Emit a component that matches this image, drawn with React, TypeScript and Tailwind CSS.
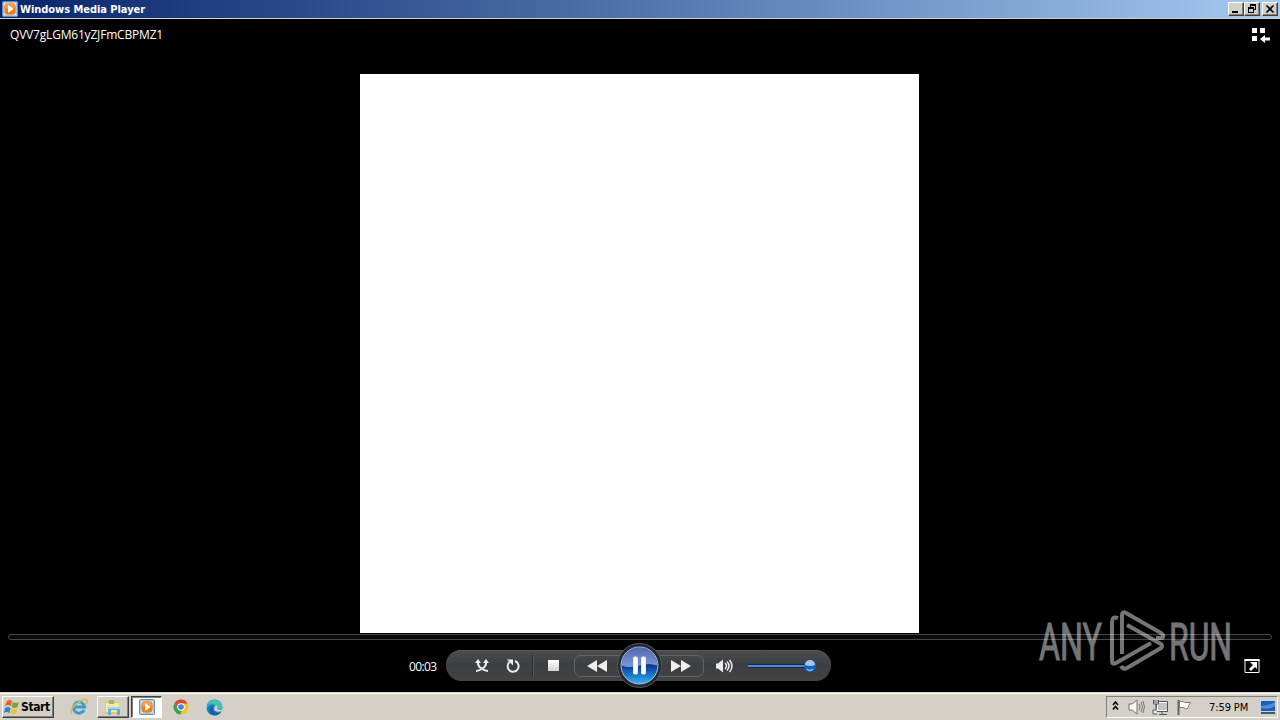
import type { ReactNode } from "react";

const raised = "border border-t-white border-l-white border-r-[#404040] border-b-[#404040] shadow-[inset_-1px_-1px_0_#808080]";

function PlayerIcon() {
    return (
        <svg width="16" height="16" viewBox="0 0 16 16">
            <rect x=".5" y=".5" width="15" height="15" rx="1" fill="#a8c6e7" stroke="#5f8fc4" />
            <rect x="2" y="2" width="12" height="12" fill="#d7e8f7" />
            <rect x="2.3" y="2.3" width="11.4" height="11.4" rx="4" fill="#ee7f17" />
            <path d="M3 7q0-4.5 3.5-4.5h3Q13 2.5 13 7 8 8.5 3 7" fill="#f5a04d" />
            <path d="M6 4 11.6 8 6 12Z" fill="#fff" />
        </svg>
    );
}

function CaptionButton({ children }: { children: ReactNode }) {
    return (
        <button className={`${raised} flex h-[14px] w-[16px] items-center justify-center bg-[#d4d0c8]`}>
            {children}
        </button>
    );
}

function TitleBar() {
    return (
        <div className="flex h-[19px] shrink-0 items-center justify-between border-b border-[#d4d0c8] bg-linear-to-r from-[#0a246a] to-[#a6caf0] px-[2px]">
            <div className="flex items-center gap-[2px]">
                <PlayerIcon />
                <span className="pt-px font-['DejaVu_Sans_Condensed','DejaVu_Sans',sans-serif] text-[11px] leading-[17px] font-bold tracking-[-0.04px] whitespace-nowrap text-white">
                    Windows Media Player
                </span>
            </div>
            <div className="flex">
                <CaptionButton>
                    <svg width="14" height="12"><path d="M3 8h6v2H3z" /></svg>
                </CaptionButton>
                <CaptionButton>
                    <svg width="14" height="12" fill="none" stroke="#000" shapeRendering="crispEdges">
                        <path d="M5 1.5h6M5 2.5h6M5.5 1v3M10.5 1v6M9 6.5h2M3 4.5h6M3 5.5h6M3.5 4v6M8.5 4v6M3 9.5h6" />
                    </svg>
                </CaptionButton>
                <div className="ml-[2px] flex">
                    <CaptionButton>
                        <svg width="14" height="12"><path d="m3.5 2.5 7 7m0-7-7 7" stroke="#000" strokeWidth="1.7" /></svg>
                    </CaptionButton>
                </div>
            </div>
        </div>
    );
}

function Watermark() {
    return (
        <svg className="absolute top-[600px] left-[1026px] overflow-visible" width="224" height="86" viewBox="-10 -8 224 86" opacity=".46">
            <g fill="#fff" stroke="#fff" strokeWidth=".9" fontFamily="Roboto, sans-serif" fontSize="52">
                <text x="3" y="51.5" textLength="63" lengthAdjust="spacingAndGlyphs">ANY</text>
                <text x="133" y="51.5" textLength="63" lengthAdjust="spacingAndGlyphs">RUN</text>
            </g>
            <g fill="none" stroke="#fff" strokeWidth="4" strokeLinejoin="round">
                <path d="M82 10Q76 8 76 14V53Q76 57 80 55L115 35" />
                <path d="M86 46V7Q86 3 90 5L125 25Q129 28 126 30L120 30" />
                <path d="M91 17 125 36Q127 38 125 40L91 60Q87 62 85 58" />
            </g>
        </svg>
    );
}

function Controls() {
    return (
        <div className="flex h-[31px] w-[385px] items-center rounded-full bg-linear-to-b from-[#4b4d50] via-[#3c3e41] to-[#424447] pl-[28px] shadow-[inset_0_1px_0_#585a5d]">
            <svg width="16" height="16" fill="none" stroke="#eee" strokeWidth="2">
                <path d="M4 4v1.5q0 2.5 3.5 5T14 13M12 4v1.5q0 2.5-3.5 5T2 13" />
                <path d="m1 5 3-4 3 4zM9 5l3-4 3 4z" fill="#eee" stroke="none" />
            </svg>
            <svg className="ml-[15px]" width="16" height="16" fill="none">
                <path d="M4.5 4A5.5 5.5 0 1 0 10 3" stroke="#eee" strokeWidth="2" />
                <path d="M2 1.5h6v6z" fill="#eee" />
            </svg>
            <div className="ml-[11px] h-[21px] w-[2px] border-l border-[#2b2d2f] bg-[#55575a]" />
            <div className="ml-[14px] h-[11px] w-[11px] bg-linear-to-b from-white to-[#d2d2d2]" />
            <div className="ml-[15px] flex h-[22px] w-[130px] items-center justify-between rounded-[7px] border border-[#626467] px-[12px]">
                <svg width="20" height="12"><path d="M10 0v12L0 6zM20 0v12L10 6z" fill="#eee" /></svg>
                <svg className="-my-3 shrink-0" width="48" height="48" viewBox="0 0 48 48">
                    <defs>
                        <linearGradient id="top" x2="0" y2="1"><stop stopColor="#5468b4" /><stop offset="1" stopColor="#7d98d8" /></linearGradient>
                        <linearGradient id="ball" x2="0" y2="1"><stop stopColor="#3253a4" /><stop offset=".52" stopColor="#0b3b98" /><stop offset="1" stopColor="#34b6f3" /></linearGradient>
                    </defs>
                    <circle cx="24.5" cy="23.5" r="22" fill="#24272d" stroke="#55595f" />
                    <circle cx="24.5" cy="23.5" r="18.5" fill="url(#ball)" stroke="#b4c2de" />
                    <path d="M6.5 23.5a18 18 0 0 1 36 0Q34 20.5 24.5 23.5T6.5 23.5" fill="url(#top)" />
                    <rect x="18.5" y="15" width="4" height="17" rx="1" fill="#fff" stroke="#e5e9f1" />
                    <rect x="26.5" y="15" width="4" height="17" rx="1" fill="#fff" stroke="#e5e9f1" />
                </svg>
                <svg width="20" height="12"><path d="M0 0v12l10-6zM10 0v12l10-6z" fill="#eee" /></svg>
            </div>
            <svg className="ml-[11px]" width="20" height="16" fill="none" stroke="#eee" strokeWidth="1.5">
                <path d="M1 5.5h2l5-4v13l-5-4H1z" fill="#eee" stroke="none" />
                <path d="M10 5q3 3 0 6M12 3.5q4 4.5 0 9M14.5 2q5 6 0 12" />
            </svg>
            <svg className="ml-[13px]" width="70" height="16">
                <path d="M0 8h64" stroke="#1e2a42" strokeWidth="4" />
                <path d="M0 8h64" stroke="#4588df" strokeWidth="2" />
                <circle cx="62" cy="8" r="6" fill="#1563c0" />
                <path d="M57 7a5 5 0 0 1 10 0Q62 9 57 7" fill="#a6c8ed" />
                <path d="M59 11q3 3 6 0" stroke="#63c6fb" strokeWidth="1.5" fill="none" />
            </svg>
        </div>
    );
}

function Taskbar() {
    return (
        <div className="flex h-[28px] shrink-0 items-center border-t border-[#d4d0c8] bg-[#d4d0c8] px-[2px] shadow-[inset_0_1px_0_white]">
            <div className={`${raised} mt-px flex h-[22px] w-[52px] items-center gap-px pl-px`}>
                <svg className="shrink-0" width="16" height="16">
                    <path d="M3 2q3-2 5 0L7 7Q4 5 1 7z" fill="#eb6029" />
                    <path d="M9 3q3 2 6 0l-1.5 5q-3 2-6 0z" fill="#71a936" />
                    <path d="M1 9q3-2 5.5 0l-1 5q-3-2-5.5 0z" fill="#3183c8" />
                    <path d="M7.500 9.5q3 2 6 0l-1 4.500q-3 2-6 0z" fill="#f4bd2e" />
                </svg>
                <span className="font-['DejaVu_Sans_Condensed','DejaVu_Sans',sans-serif] text-[12px] leading-[18px] font-bold tracking-[-0.4px]">Start</span>
            </div>
            <svg className="mt-px ml-[16px]" width="18" height="18" fill="none">
                <path d="M14 12A5.5 5.5 0 1 1 14.5 9H5" stroke="#399bd5" strokeWidth="3" />
                <path d="M4 8Q6 4 11 5" stroke="#90d5f2" />
                <path d="M2 16Q-1 12 6 6t11-4q1 2-2 5" stroke="#e3b92f" strokeWidth="1.5" />
            </svg>
            <div className={`${raised} mt-px ml-[9px] flex h-[22px] w-[32px] items-center justify-center`}>
                <svg width="18" height="18">
                    <path d="M1 3h6l1 1h7v12H1z" fill="#e4c969" />
                    <path d="M2 5h13v9H2z" fill="#f5e7a5" />
                    <path d="M5 2h5v4H5z" fill="#8bbd78" />
                    <path d="M4 17V9h12v8h-3v-5H7v5z" fill="#62afd7" />
                    <path d="M4 9h12v2H4z" fill="#9bd9ee" />
                </svg>
            </div>
            <div className="mt-px ml-[2px] flex h-[22px] w-[31px] items-center justify-center border border-t-[#404040] border-l-[#404040] border-r-white border-b-white bg-white shadow-[inset_1px_1px_0_#808080]">
                <PlayerIcon />
            </div>
            <svg className="mt-px ml-[11px]" width="16" height="16" viewBox="0 0 16 16">
                <circle cx="8" cy="8" r="7.5" fill="#f2c51d" />
                <path d="M1.5 4.2A7.5 7.5 0 0 1 14.6 4.5H8a3.5 3.5 0 0 0-3 5z" fill="#db493b" />
                <path d="M1.5 4.2 5 10a3.5 3.5 0 0 0 4 1.5l-2 4A7.5 7.5 0 0 1 1.5 4.2" fill="#2da456" />
                <circle cx="8" cy="8" r="3.8" fill="#fff" />
                <circle cx="8" cy="8" r="2.8" fill="#4381dc" />
            </svg>
            <svg className="mt-px ml-[17px]" width="17" height="17" viewBox="0 0 17 17">
                <circle cx="8.5" cy="8.5" r="8" fill="#1679c5" />
                <path d="M1 6C4-1 14-1 16 6c1 5-3 6-6 5 2-4-3-7-9-5" fill="#43c3b0" />
                <path d="M1 6q5-3 9 0-7-1-9 4z" fill="#269ed5" />
                <path d="M7 8c-2 5 3 8 8 5-4 6-12 3-11-2q0-3 3-3" fill="#155ba6" />
                <path d="M9 7c-3 5 2 7 8 5v-2c-4 2-6 1-6-1 1-2-1-3-2-2" fill="#d4d0c8" />
            </svg>
            <div className="mt-px ml-auto flex h-[22px] w-[172px] items-center border border-t-[#808080] border-l-[#808080] border-r-white border-b-white pl-[4px]">
                <svg className="-mt-[2px] shrink-0" width="9" height="14" fill="none" stroke="#000" strokeWidth="1.6"><path d="m2 6 2.5-3L7 6M2 10.5l2.5-3 2.5 3" /></svg>
                <svg className="ml-[8px] shrink-0" width="17" height="16" fill="none" stroke="#777">
                    <path d="M1 5h3l5-4v14l-5-4H1z" fill="#f5f5f5" />
                    <path d="M11 5q2 3 0 6M13 3q3 5 0 10M15 2q3 6 0 12" />
                </svg>
                <svg className="ml-[7px] shrink-0" width="17" height="17" fill="none" stroke="#555">
                    <path d="M5.5 3.5h10v8h-10z" fill="#c5c5c5" stroke="#fff" />
                    <path d="M4.5 2.5h11v10h-11zM7 15.5h8M10 13v3" />
                    <path d="M1.5 1v4h5V1M3 1v3M5 1v3M4 5v6H1v4h4" fill="#eee" />
                </svg>
                <svg className="ml-[7px] shrink-0" width="17" height="17">
                    <path d="M2.5 1v15" stroke="#666" strokeWidth="2" />
                    <path d="M3.5 2.5q3-1 5 1h6q-2 3-3 6-2 1-4-1H3.5z" fill="#fff" stroke="#777" />
                </svg>
                <span className="ml-[16px] w-[42px] shrink-0 pt-px font-['DejaVu_Sans_Condensed','DejaVu_Sans',sans-serif] text-[11px] leading-[17px] tracking-[-0.1px] whitespace-nowrap">7:59 PM</span>
                <svg className="ml-[9px] shrink-0" width="17" height="16">
                    <path d="M0 1h16v12H0z" fill="#b8d8f5" />
                    <path d="M1 2h14v10H1z" fill="#245cae" />
                    <path d="M1 7q7 0 14-4v4Q8 11 1 9z" fill="#4b91d6" />
                    <path d="M1 13h14v2H1z" fill="#405a7a" />
                </svg>
            </div>
        </div>
    );
}

export default function App() {
    return (
        <div className="relative flex h-[720px] w-[1280px] flex-col overflow-hidden bg-black">
            <TitleBar />
            <main className="flex h-[673px] shrink-0 flex-col">
                <div className="flex h-[55px] items-start justify-between pt-[7px] pr-[9px] pl-[10px]">
                    <span className="font-['Open_Sans',sans-serif] text-[12px] leading-[18px] tracking-[-0.19px] whitespace-nowrap text-white">QVV7gLGM61yZJFmCBPMZ1</span>
                    <svg width="20" height="20" fill="#fff">
                        <path d="M1 2h5v5H1zM9 2h5v5H9zM1 10h5v5H1zM9 13l5-4v2.5h5v3h-5V17z" />
                    </svg>
                </div>
                <div className="ml-[360px] h-[559px] w-[559px] bg-white" />
                <div className="mx-[8px] mt-px h-[6px] rounded-[3px] border border-[#454749] bg-[#090a0b]" />
                <div className="flex h-[51px] items-center">
                    <span className="ml-[409px] w-[37px] pt-[2px] font-['Open_Sans',sans-serif] text-[12px] leading-[18px] tracking-[-0.6px] text-white">00:03</span>
                    <Controls />
                    <svg className="mt-px ml-[413px]" width="16" height="16">
                        <path d="M1 1.5h14v13H1z" fill="none" stroke="#fff" />
                        <path d="M.5 1h15v2H.5zM6 4h7v7l-2-2-4 4-2-2 4-4z" fill="#fff" />
                    </svg>
                </div>
            </main>
            <Taskbar />
            <Watermark />
        </div>
    );
}
